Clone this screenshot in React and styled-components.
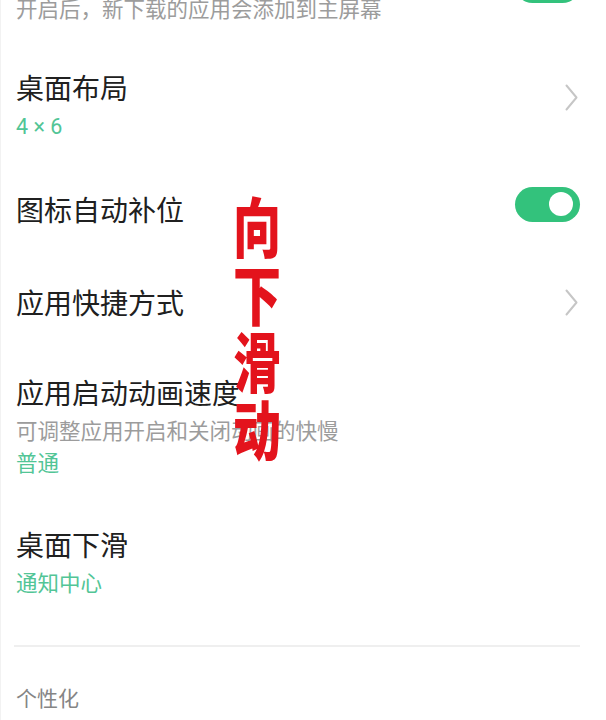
import React from "react";
import styled, { createGlobalStyle } from "styled-components";

const Global = createGlobalStyle`
  html, body { margin: 0; padding: 0; background: #ffffff; }
  body { font-family: "Noto Sans CJK SC", "Noto Sans", sans-serif; }
`;

const Page = styled.div`
  position: relative;
  width: 606px;
  height: 720px;
  overflow: hidden;
  background: #ffffff;
  border-left: 1px solid #f2f2f2;
  box-sizing: border-box;
`;

const List = styled.div`
  display: flex;
  flex-direction: column;
  margin-top: -75px;
`;

const Row = styled.div`
  display: flex;
  align-items: center;
  justify-content: space-between;
  padding: 20px 26px ${(p) => p.$pb ?? 20}px 15px;
`;

const Texts = styled.div`
  display: flex;
  flex-direction: column;
  min-width: 0;
`;

const Title = styled.div`
  font-size: 28px;
  line-height: 50px;
  color: #202020;
  white-space: nowrap;
`;

const Sub = styled.div`
  font-family: "Roboto", "Noto Sans CJK SC", sans-serif;
  font-size: 21.5px;
  line-height: 30px;
  color: ${(p) => (p.$accent ? "#52c596" : "#9c9c9c")};
  white-space: nowrap;
  & + & { margin-top: 2px; }
`;

const Toggle = styled.div`
  flex: none;
  width: 65px;
  height: 35px;
  border-radius: 18px;
  background: #33c27c;
  display: flex;
  align-items: center;
  justify-content: flex-end;
  padding-right: 7px;
  box-sizing: border-box;
  margin-bottom: ${(p) => p.$lift ?? 0}px;
`;

const Knob = styled.div`
  width: 24px;
  height: 24px;
  border-radius: 50%;
  background: #ffffff;
`;

const Chevron = styled.svg`
  flex: none;
  width: 13px;
  height: 27px;
  margin-right: 2px;
  margin-bottom: ${(p) => p.$lift ?? 0}px;
`;

const Divider = styled.div`
  height: 2px;
  background: #efefef;
  margin: 26px 26px 0 13px;
`;

const SectionHeader = styled.div`
  padding: 35px 15px 0;
  font-size: 21px;
  line-height: 30px;
  color: #858585;
`;

const Overlay = styled.div`
  position: absolute;
  left: 231px;
  top: 190px;
  width: 50px;
  display: flex;
  flex-direction: column;
  align-items: center;
  font-family: "Noto Sans CJK SC", sans-serif;
  font-weight: 900;
  font-size: 48px;
  line-height: 50px;
  color: #e3131c;
  transform: scaleY(1.35);
  transform-origin: top center;
`;

const Arrow = ({ lift }) => (
  <Chevron viewBox="0 0 13 27" fill="none" $lift={lift}>
    <path d="M1.5 1.5 L11.5 13.5 L1.5 25.5" stroke="#c6c6c6" strokeWidth="2" strokeLinecap="round" strokeLinejoin="round" />
  </Chevron>
);

const Switch = ({ lift }) => (
  <Toggle $lift={lift}>
    <Knob />
  </Toggle>
);

export default function App() {
  return (
    <>
      <Global />
      <Page>
        <List>
          <Row $pb={17}>
            <Texts>
              <Title>将新应用添加到桌面</Title>
              <Sub>开启后，新下载的应用会添加到主屏幕</Sub>
            </Texts>
            <Switch />
          </Row>
          <Row $pb={22}>
            <Texts>
              <Title>桌面布局</Title>
              <Sub $accent>4 × 6</Sub>
            </Texts>
            <Arrow lift={10} />
          </Row>
          <Row $pb={23}>
            <Texts>
              <Title>图标自动补位</Title>
            </Texts>
            <Switch lift={10} />
          </Row>
          <Row>
            <Texts>
              <Title>应用快捷方式</Title>
            </Texts>
            <Arrow />
          </Row>
          <Row>
            <Texts>
              <Title>应用启动动画速度</Title>
              <Sub>可调整应用开启和关闭动画的快慢</Sub>
              <Sub $accent>普通</Sub>
            </Texts>
          </Row>
          <Row>
            <Texts>
              <Title>桌面下滑</Title>
              <Sub $accent>通知中心</Sub>
            </Texts>
          </Row>
          <Divider />
          <SectionHeader>个性化</SectionHeader>
        </List>
        <Overlay>
          <span>向</span>
          <span>下</span>
          <span>滑</span>
          <span>动</span>
        </Overlay>
      </Page>
    </>
  );
}
